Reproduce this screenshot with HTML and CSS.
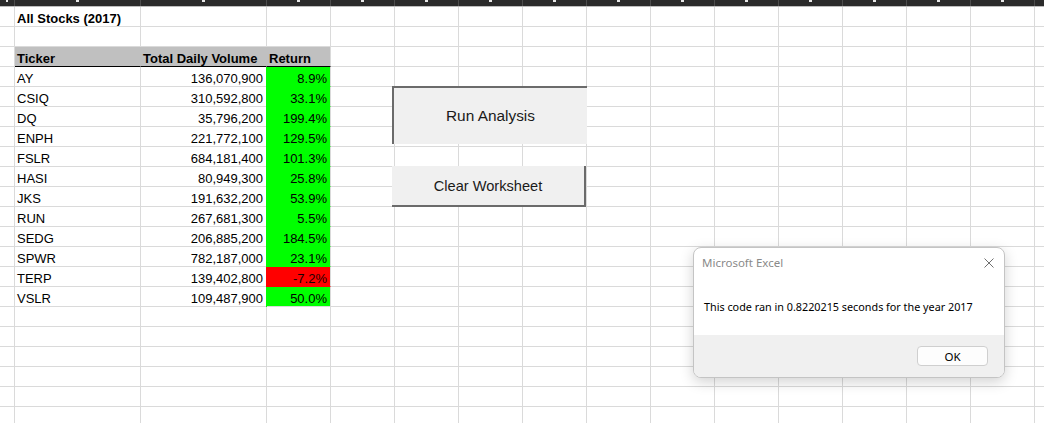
FILE: index.html
```html
<!DOCTYPE html>
<html>
<head>
<meta charset="utf-8">
<link rel="stylesheet" href="styles.css">
</head>
<body>
<div class="app">
  <div class="colbar">
    <div class="ch w15"></div>
    <div class="ch w126"></div>
    <div class="ch w126"></div>
    <div class="ch w64"></div>
    <div class="ch w64"></div>
    <div class="ch w64"></div>
    <div class="ch w64"></div>
    <div class="ch w64"></div>
    <div class="ch w64"></div>
    <div class="ch w64"></div>
    <div class="ch w64"></div>
    <div class="ch w64"></div>
    <div class="ch w64"></div>
    <div class="ch w64"></div>
    <div class="ch w64"></div>
    <div class="ch w64"></div>
  </div>
  <div class="sheet">
    <div class="rows">
      <div class="row"><div class="c"></div><div class="c b">All Stocks (2017)</div><div class="c"></div><div class="c"></div></div>
      <div class="row"><div class="c"></div><div class="c"></div><div class="c"></div><div class="c"></div></div>
      <div class="row head"><div class="c"></div><div class="c b h">Ticker</div><div class="c b h">Total Daily Volume</div><div class="c b h">Return</div></div>
      <div class="row"><div class="c"></div><div class="c">AY</div><div class="c r">136,070,900</div><div class="c r pos">8.9%</div></div>
      <div class="row"><div class="c"></div><div class="c">CSIQ</div><div class="c r">310,592,800</div><div class="c r pos">33.1%</div></div>
      <div class="row"><div class="c"></div><div class="c">DQ</div><div class="c r">35,796,200</div><div class="c r pos">199.4%</div></div>
      <div class="row"><div class="c"></div><div class="c">ENPH</div><div class="c r">221,772,100</div><div class="c r pos">129.5%</div></div>
      <div class="row"><div class="c"></div><div class="c">FSLR</div><div class="c r">684,181,400</div><div class="c r pos">101.3%</div></div>
      <div class="row"><div class="c"></div><div class="c">HASI</div><div class="c r">80,949,300</div><div class="c r pos">25.8%</div></div>
      <div class="row"><div class="c"></div><div class="c">JKS</div><div class="c r">191,632,200</div><div class="c r pos">53.9%</div></div>
      <div class="row"><div class="c"></div><div class="c">RUN</div><div class="c r">267,681,300</div><div class="c r pos">5.5%</div></div>
      <div class="row"><div class="c"></div><div class="c">SEDG</div><div class="c r">206,885,200</div><div class="c r pos">184.5%</div></div>
      <div class="row"><div class="c"></div><div class="c">SPWR</div><div class="c r">782,187,000</div><div class="c r pos">23.1%</div></div>
      <div class="row"><div class="c"></div><div class="c">TERP</div><div class="c r">139,402,800</div><div class="c r neg">-7.2%</div></div>
      <div class="row"><div class="c"></div><div class="c">VSLR</div><div class="c r">109,487,900</div><div class="c r pos last">50.0%</div></div>
      <div class="row"><div class="c"></div><div class="c"></div><div class="c"></div><div class="c"></div></div>
      <div class="row"><div class="c"></div><div class="c"></div><div class="c"></div><div class="c"></div></div>
      <div class="row"><div class="c"></div><div class="c"></div><div class="c"></div><div class="c"></div></div>
      <div class="row"><div class="c"></div><div class="c"></div><div class="c"></div><div class="c"></div></div>
      <div class="row"><div class="c"></div><div class="c"></div><div class="c"></div><div class="c"></div></div>
      <div class="row"><div class="c"></div><div class="c"></div><div class="c"></div><div class="c"></div></div>
    </div>
  </div>

  <div class="btn run">Run Analysis</div>
  <div class="btn clear">Clear Worksheet</div>

  <div class="dialog">
    <div class="dlg-title">
      <span>Microsoft Excel</span>
      <svg class="close" width="10" height="10" viewBox="0 0 10 10"><path d="M0.5 0.5 L9.5 9.5 M9.5 0.5 L0.5 9.5" stroke="#707070" stroke-width="1" fill="none"/></svg>
    </div>
    <div class="dlg-body">This code ran in 0.8220215 seconds for the year 2017</div>
    <div class="dlg-foot"><div class="ok">OK</div></div>
  </div>
</div>
</body>
</html>
```

FILE: styles.css
```css
* { box-sizing: border-box; }
html, body { margin: 0; padding: 0; background: #ffffff; }
.app {
  position: relative;
  width: 1044px;
  height: 423px;
  overflow: hidden;
  font-family: "Liberation Sans", Arial, sans-serif;
}
.colbar {
  display: flex;
  height: 6px;
  background: #2b2b2b;
  overflow: hidden;
}
.ch {
  flex: none;
  height: 6px;
  border-right: 1px solid #4d4d4d;
  display: flex;
  justify-content: center;
}
.ch::after {
  content: "";
  width: 3px;
  height: 2px;
  background: #e8e8e8;
}
.w15 { width: 15px; }
.w15::after { width: 2px; }
.w126 { width: 126px; }
.w64 { width: 64px; }

.sheet {
  border-top: 1px solid #bdbdbd;
  height: 417px;
  background-image:
    repeating-linear-gradient(to right, transparent 0 63px, #dadada 63px 64px),
    repeating-linear-gradient(to bottom, transparent 0 19px, #dadada 19px 20px);
  background-position: 331px 0, 0 0;
}
.rows { width: 331px; }
.row {
  display: grid;
  grid-template-columns: 15px 126px 126px 64px;
  height: 20px;
}
.c {
  height: 20px;
  background: #ffffff;
  border-right: 1px solid #dadada;
  border-bottom: 1px solid #dadada;
  padding: 2px 3px 0 2px;
  font-size: 13px;
  line-height: 19px;
  color: #000000;
  white-space: nowrap;
  overflow: hidden;
}
.b { font-weight: bold; }
.r { text-align: right; }
.h {
  background: #c0c0c0;
  border-bottom-color: #000000;
  border-right-color: #c0c0c0;
}
.head .c:last-child { border-right-color: #dadada; }
.pos {
  background: #00ff00;
  border-bottom-color: #00ff00;
  box-shadow: -1px 0 0 #00ff00;
}
.pos.last { border-bottom-color: #dadada; }
.neg {
  background: #ff0000;
  border-bottom-color: #ff0000;
  box-shadow: -1px 0 0 #ff0000;
  color: #1a0000;
}

.btn {
  position: absolute;
  left: 392px;
  display: flex;
  align-items: center;
  justify-content: center;
  background: #f0f0f0;
  color: #1a1a1a;
  font-family: "Liberation Sans", Arial, sans-serif;
}
.run {
  top: 86px;
  width: 195px;
  height: 58px;
  border-top: 2px solid #6b6b6b;
  border-left: 2px solid #6b6b6b;
  font-size: 15.4px;
}
.clear {
  top: 166px;
  width: 194px;
  height: 41px;
  border-right: 2px solid #6b6b6b;
  border-bottom: 2px solid #6b6b6b;
  font-size: 14.6px;
}

.dialog {
  position: absolute;
  left: 693px;
  top: 247px;
  width: 312px;
  height: 131px;
  background: #ffffff;
  border: 1px solid #c4c4c4;
  border-radius: 8px;
  box-shadow: 0 4px 14px rgba(0, 0, 0, 0.18);
  overflow: hidden;
  display: flex;
  flex-direction: column;
  font-family: "Noto Sans", "Segoe UI", sans-serif;
}
.dlg-title {
  height: 29px;
  flex: none;
  display: flex;
  align-items: center;
  justify-content: space-between;
  padding: 0 10px 0 8px;
  font-size: 11.5px;
  color: #8a8a8a;
}
.close { display: block; }
.dlg-body {
  flex: 1;
  display: flex;
  align-items: center;
  padding-left: 10px;
  font-size: 10.8px;
  color: #000000;
  white-space: nowrap;
}
.dlg-foot {
  flex: none;
  height: 42px;
  background: #f0f0f0;
  display: flex;
  align-items: center;
  justify-content: flex-end;
  padding-right: 16px;
}
.ok {
  width: 71px;
  height: 20px;
  border: 1px solid #cfcfcf;
  border-radius: 4px;
  background: #fdfdfd;
  display: flex;
  align-items: center;
  justify-content: center;
  font-size: 11.5px;
  color: #000000;
}
```
